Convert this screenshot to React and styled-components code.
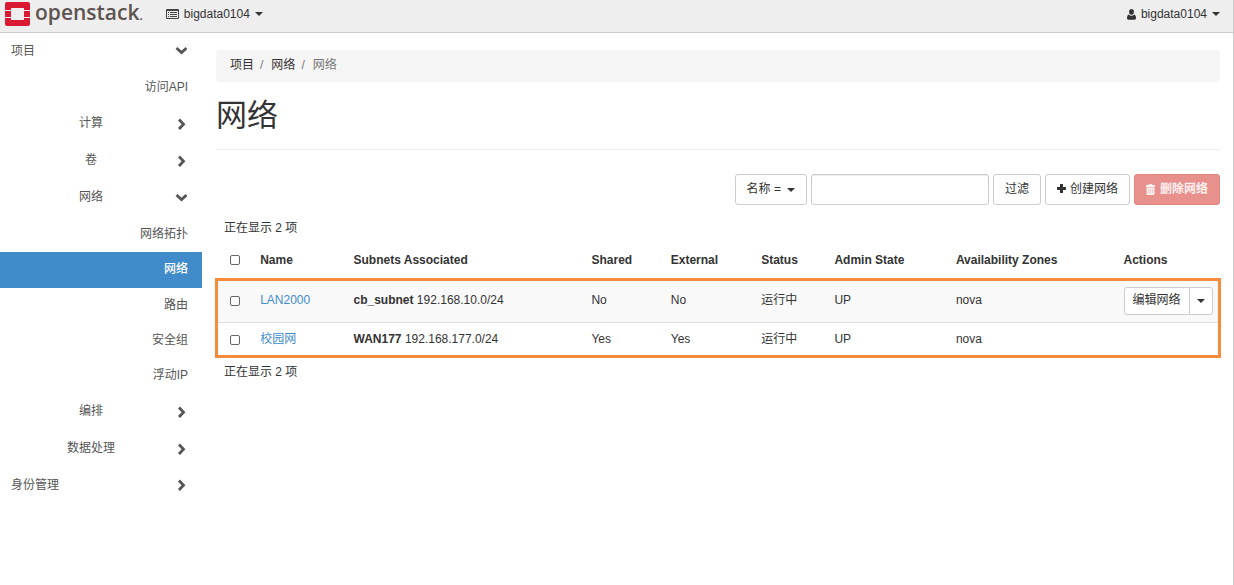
import React, { useState } from "react";
import styled, { createGlobalStyle } from "styled-components";

const GlobalStyle = createGlobalStyle`
  * {
    box-sizing: border-box;
  }
  body {
    margin: 0;
    background-color: #fff;
    color: #333;
    font-family: "Liberation Sans", "Noto Sans CJK SC", sans-serif;
    font-size: 12px;
    line-height: 17px;
  }
  button, input {
    font-family: inherit;
    font-size: inherit;
    line-height: inherit;
  }
`;

const Page = styled.div`
  min-height: 100vh;
  display: flex;
  flex-direction: column;
  border-right: 1px solid #ccc;
`;

const Navbar = styled.header`
  height: 33px;
  flex: none;
  display: flex;
  align-items: center;
  padding: 0 13px 4px 5px;
  background-color: #eee;
  border-bottom: 1px solid #ccc;
`;

const Brand = styled.a`
  display: flex;
  align-items: center;
  gap: 5px;
  margin-right: 23px;
  color: #5d5350;
  text-decoration: none;
`;

const Wordmark = styled.span`
  padding-bottom: 1px;
  font-family: "Open Sans", "Noto Sans", sans-serif;
  font-size: 21px;
  font-weight: 600;
  line-height: 24px;

  small {
    font-size: 12px;
  }
`;

const MenuButton = styled.button`
  display: flex;
  align-items: center;
  gap: 5px;
  margin-left: ${({ $right }) => ($right ? "auto" : "0")};
  padding: 0;
  border: none;
  background: none;
  color: #333;
  cursor: pointer;
`;

const Caret = styled.span`
  border-top: 4px solid;
  border-left: 4px solid transparent;
  border-right: 4px solid transparent;
`;

const Body = styled.div`
  flex: 1;
  display: flex;
`;

const Sidebar = styled.nav`
  width: 202px;
  flex: none;
`;

const Group = styled.button`
  width: 100%;
  height: ${({ $top }) => ($top ? "36px" : "37px")};
  display: flex;
  align-items: center;
  padding: 0 15px 0 11px;
  border: none;
  background: none;
  color: #555;
  cursor: pointer;
`;

const GroupName = styled.span`
  flex: 1;
  padding: 0 4px 0 0;
  text-align: ${({ $top }) => ($top ? "left" : "center")};
`;

const SubList = styled.ul`
  list-style: none;
  margin: 0;
  padding: 1px 0 0;
`;

const SubLink = styled.a`
  height: ${({ $active }) => ($active ? "36px" : "35px")};
  display: flex;
  align-items: center;
  justify-content: flex-end;
  padding: 0 14px 1px 0;
  background-color: ${({ $active }) => ($active ? "#428bca" : "transparent")};
  color: ${({ $active }) => ($active ? "#fff" : "#555")};
  font-weight: ${({ $active }) => ($active ? "500" : "400")};
  text-decoration: none;
`;

const Main = styled.main`
  flex: 1;
  min-width: 0;
  padding: 17px 13px 20px 14px;
`;

const Breadcrumb = styled.ol`
  list-style: none;
  margin: 0;
  padding: 7px 14px 8px;
  display: flex;
  border-radius: 4px;
  background-color: #f5f5f5;
  color: #777;

  li + li::before {
    content: "/";
    padding: 0 8px 0 6px;
  }
  a {
    color: #333;
    text-decoration: none;
  }
`;

const Title = styled.h1`
  margin: 0;
  padding: 14px 0 13px;
  border-bottom: 1px solid #eee;
  font-size: 31px;
  font-weight: 400;
  line-height: 40px;
`;

const Toolbar = styled.div`
  display: flex;
  justify-content: flex-end;
  gap: 4px;
  margin-top: 24px;
`;

const Button = styled.button`
  height: 31px;
  display: flex;
  align-items: center;
  gap: 4px;
  padding: 0 11px;
  border: 1px solid #ccc;
  border-radius: 3px;
  background-color: #fff;
  color: #333;
  cursor: pointer;
`;

const FieldButton = styled(Button)`
  gap: 6px;
`;

const DangerButton = styled(Button)`
  gap: 5px;
  border-color: #e08580;
  background-color: #e8908c;
  color: #fdf1f0;
  font-weight: 700;
`;

const FilterInput = styled.input`
  width: 178px;
  height: 31px;
  padding: 0 10px;
  border: 1px solid #ccc;
  border-radius: 3px;
  box-shadow: inset 0 1px 1px rgba(0, 0, 0, 0.075);
`;

const Table = styled.table`
  width: 100%;
  table-layout: fixed;
  border-collapse: collapse;
  text-align: left;

  caption {
    padding: 15px 8px 7px;
    text-align: left;
  }
  th {
    padding: 6px 8px 8px;
  }
  td {
    padding: 7px 8px;
  }
  thead th {
    height: 35px;
    border-bottom: 1px solid #ddd;
  }
  tbody {
    outline: 3px solid #f88a3b;
    outline-offset: -2px;
  }
  tbody tr:first-child {
    height: 43px;
    background-color: #f9f9f9;
  }
  tbody tr + tr {
    height: 35px;
  }
  tbody tr + tr td {
    border-top: 1px solid #ddd;
  }
  td a {
    color: #428bca;
    text-decoration: none;
  }
`;

const Check = styled.input`
  display: block;
  width: 10px;
  height: 10px;
  margin: 0 0 0 6px;
  appearance: none;
  border: 1px solid #666;
  border-radius: 2px;
  background-color: #fff;

  &:checked {
    background-color: #428bca;
  }
`;

const SplitButton = styled.div`
  display: flex;
`;

const SmallButton = styled(Button)`
  height: 28px;
  padding: 0 8px 1px;
  border-radius: 3px 0 0 3px;
  white-space: nowrap;
`;

const SmallToggle = styled(SmallButton)`
  margin-left: -1px;
  padding: 0 7px;
  border-radius: 0 3px 3px 0;
`;

const Count = styled.div`
  padding: 7px 8px;
`;

const Logo = () => (
  <svg width="25" height="24" viewBox="0 0 25 24" aria-hidden="true">
    <path
      fill="#da1a32"
      d="M2 0h21a2 2 0 0 1 2 2v6h-6V6.500a.5.5 0 0 0-.5-.5h-12a.5.5 0 0 0-.5.5V8H0V2a2 2 0 0 1 2-2zM0 9h6v6H0zM19 9h6v6h-6zM0 16h6v1.500a.5.5 0 0 0 .5.5h12a.5.5 0 0 0 .5-.5V16h6v6a2 2 0 0 1-2 2H2a2 2 0 0 1-2-2z"
    />
  </svg>
);

const Chevron = ({ open }) => (
  <svg width="12" height="12" viewBox="0 0 12 12" aria-hidden="true">
    <path
      d={open ? "M1.500 3 6.500 7.500 11.500 3" : "M4 1.500 8.500 6.300 4 11"}
      fill="none"
      stroke="#555"
      strokeWidth="2.800"
    />
  </svg>
);

const ListIcon = () => (
  <svg width="13" height="10" viewBox="0 0 13 10" aria-hidden="true">
    <path
      fill="#444"
      fillRule="evenodd"
      d="M1 0h11a1 1 0 0 1 1 1v8a1 1 0 0 1-1 1H1a1 1 0 0 1-1-1V1a1 1 0 0 1 1-1zM1 2v7h11V2zM2 3h1v1H2zM4 3h7v1H4zM2 5h1v1H2zM4 5h7v1H4zM2 7h1v1H2zM4 7h7v1H4z"
    />
  </svg>
);

const UserIcon = () => (
  <svg width="9" height="11" viewBox="0 0 9 11" aria-hidden="true">
    <path
      fill="#333"
      d="M4.500 0C6 0 6.900 1.100 6.900 2.700S6 5.800 4.500 5.800 2.100 4.300 2.100 2.700 3 0 4.500 0zM2 5.400c.7.900 1.500 1.300 2.500 1.300s1.800-.4 2.500-1.300c1.500.3 2 1.600 2 3.600 0 1.200-.6 1.800-1.700 1.800H1.700C.6 10.800 0 10.200 0 9c0-2 .5-3.300 2-3.600z"
    />
  </svg>
);

const PlusIcon = () => (
  <svg width="9" height="11" viewBox="0 0 9 11" aria-hidden="true">
    <path fill="#333" d="M3 0h3v3h3v3H6v3H3V6H0V3h3z" />
  </svg>
);

const TrashIcon = () => (
  <svg width="9" height="11" viewBox="0 0 9 11" aria-hidden="true">
    <path
      fill="currentColor"
      fillRule="evenodd"
      d="M2.800 0h3.400v1H9v2H0V1h2.800zM.5 3.500h8V10a1 1 0 0 1-1 1h-6a1 1 0 0 1-1-1zM2.400 4.800v4.500h.4V4.800zM4.300 4.800v4.500h.4V4.800zM6.200 4.800v4.500h.4V4.800z"
    />
  </svg>
);

const columns = [
  ["Name", "9.3%"],
  ["Subnets Associated", "23.7%"],
  ["Shared", "7.9%"],
  ["External", "9%"],
  ["Status", "7.3%"],
  ["Admin State", "12.1%"],
  ["Availability Zones", "16.7%"],
  ["Actions", "10.4%"],
];

const networks = [
  { name: "LAN2000", subnet: "cb_subnet", cidr: "192.168.10.0/24", shared: "No", external: "No", editable: true },
  { name: "校园网", subnet: "WAN177", cidr: "192.168.177.0/24", shared: "Yes", external: "Yes" },
];

const menu = [
  { name: "项目", top: true, open: true, links: ["访问API"] },
  { name: "计算" },
  { name: "卷" },
  { name: "网络", open: true, links: ["网络拓扑", "网络", "路由", "安全组", "浮动IP"] },
  { name: "编排" },
  { name: "数据处理" },
  { name: "身份管理", top: true },
];

const App = () => {
  const [filter, setFilter] = useState("");

  return (
    <>
      <GlobalStyle />
      <Page>
        <Navbar>
          <Brand href="#">
            <Logo />
            <Wordmark>openstack<small>.</small></Wordmark>
          </Brand>
          <MenuButton>
            <ListIcon />
            bigdata0104
            <Caret />
          </MenuButton>
          <MenuButton $right>
            <UserIcon />
            bigdata0104
            <Caret />
          </MenuButton>
        </Navbar>
        <Body>
          <Sidebar>
            {menu.map((group) => (
              <React.Fragment key={group.name}>
                <Group $top={group.top} aria-expanded={!!group.open}>
                  <GroupName $top={group.top}>{group.name}</GroupName>
                  <Chevron open={group.open} />
                </Group>
                {group.links && (
                  <SubList>
                    {group.links.map((link) => (
                      <li key={link}>
                        <SubLink href="#" $active={link === "网络"}>{link}</SubLink>
                      </li>
                    ))}
                  </SubList>
                )}
              </React.Fragment>
            ))}
          </Sidebar>
          <Main>
            <Breadcrumb>
              <li><a href="#">项目</a></li>
              <li><a href="#">网络</a></li>
              <li>网络</li>
            </Breadcrumb>
            <Title>网络</Title>
            <Toolbar>
              <FieldButton>名称 = <Caret /></FieldButton>
              <FilterInput aria-label="过滤" value={filter} onChange={(e) => setFilter(e.target.value)} />
              <Button>过滤</Button>
              <Button><PlusIcon />创建网络</Button>
              <DangerButton><TrashIcon />删除网络</DangerButton>
            </Toolbar>
            <Table>
              <caption>正在显示 2 项</caption>
              <colgroup>
                <col width="3.6%" />
                {columns.map(([name, width]) => <col key={name} width={width} />)}
              </colgroup>
              <thead>
                <tr>
                  <th><Check type="checkbox" aria-label="all" /></th>
                  {columns.map(([name]) => <th key={name}>{name}</th>)}
                </tr>
              </thead>
              <tbody>
                {networks.map((net) => (
                  <tr key={net.name}>
                    <td><Check type="checkbox" aria-label={net.name} /></td>
                    <td><a href="#">{net.name}</a></td>
                    <td><b>{net.subnet}</b> {net.cidr}</td>
                    <td>{net.shared}</td>
                    <td>{net.external}</td>
                    <td>运行中</td>
                    <td>UP</td>
                    <td>nova</td>
                    <td>
                      {net.editable && (
                        <SplitButton>
                          <SmallButton>编辑网络</SmallButton>
                          <SmallToggle aria-label="more"><Caret /></SmallToggle>
                        </SplitButton>
                      )}
                    </td>
                  </tr>
                ))}
              </tbody>
            </Table>
            <Count>正在显示 2 项</Count>
          </Main>
        </Body>
      </Page>
    </>
  );
};

export default App;
